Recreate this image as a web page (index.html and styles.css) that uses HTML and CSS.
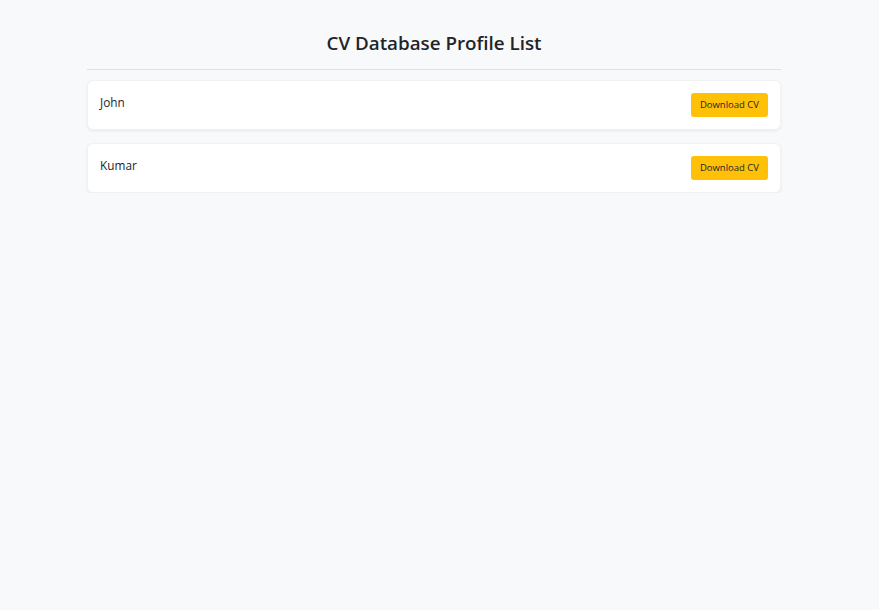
FILE: index.html
```html
<!DOCTYPE html>
<html lang="en">
<head>
<meta charset="utf-8">
<title>CV Database Profile List</title>
<link rel="stylesheet" href="styles.css">
</head>
<body>
<main class="container">
  <header class="page-header">
    <h1 class="page-title">CV Database Profile List</h1>
  </header>
  <ul class="profile-list">
    <li class="profile-card">
      <span class="profile-name">John</span>
      <button class="btn-download" type="button">Download CV</button>
    </li>
    <li class="profile-card">
      <span class="profile-name">Kumar</span>
      <button class="btn-download" type="button">Download CV</button>
    </li>
  </ul>
</main>
</body>
</html>
```

FILE: styles.css
```css
html, body {
  margin: 0;
  padding: 0;
}
body {
  background: #f8f9fa;
  color: #212529;
  font-family: "Open Sans", "Noto Sans", "Liberation Sans", sans-serif;
  padding-right: 11px;
}
.container {
  width: 694px;
  margin: 0 auto;
  padding-top: 31px;
}
.page-header {
  border-bottom: 1px solid #dee2e6;
  padding-bottom: 14px;
  margin-bottom: 10px;
}
.page-title {
  margin: 0;
  text-align: center;
  font-size: 18.8px;
  line-height: 24px;
  font-weight: 600;
  color: #212529;
}
.profile-list {
  list-style: none;
  margin: 0;
  padding: 0;
  display: flex;
  flex-direction: column;
  gap: 13px;
}
.profile-card {
  display: flex;
  justify-content: space-between;
  align-items: flex-start;
  background: #fff;
  border: 1px solid #f1f2f4;
  border-radius: 6px;
  box-shadow: 0 1px 3px rgba(0, 0, 0, 0.07);
  padding: 12px;
}
.profile-name {
  font-size: 11.8px;
  line-height: 18px;
  color: #212529;
}
.btn-download {
  height: 24px;
  padding: 0 9px;
  border: none;
  border-radius: 3px;
  background: #ffc107;
  color: #212529;
  font-family: inherit;
  font-size: 9.5px;
  line-height: 24px;
  cursor: pointer;
}
```
